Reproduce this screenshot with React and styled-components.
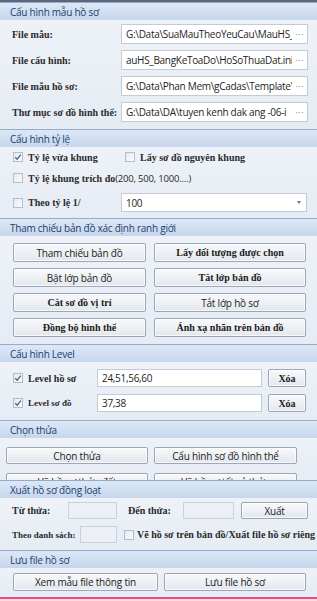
import React from "react";
import styled, { createGlobalStyle } from "styled-components";

const SANS = `"Open Sans", "Noto Sans", "DejaVu Sans", sans-serif`;
const SERIF = `"Liberation Serif", "DejaVu Serif", serif`;

const Global = createGlobalStyle`
  html, body { margin: 0; padding: 0; background: #e9eef5; }
  body { width: 317px; height: 601px; overflow: hidden; font-family: ${SANS}; }
  * { box-sizing: border-box; }
`;

const Frame = styled.div`
  width: 317px;
  height: 601px;
  display: flex;
  flex-direction: column;
  background: #e8edf4;
  border-top: 2px solid #5a6779;
  overflow: hidden;
`;

const Header = styled.div`
  height: 18px;
  flex: none;
  display: flex;
  align-items: center;
  padding-left: 10px;
  border-top: 1px solid #93abcd;
  background: linear-gradient(#dde8f6, #c6d6ec);
  color: #1c3d70;
  font-family: ${SANS};
  font-size: 10px;
  letter-spacing: -0.25px;
  position: relative;
  z-index: 1;
`;

const Body = styled.div`
  height: ${(p) => p.$h}px;
  flex: none;
  padding: ${(p) => p.$pad || "0"};
  display: flex;
  flex-direction: column;
  gap: ${(p) => p.$gap || 0}px;
  overflow: hidden;
  background: linear-gradient(#eef2f8, #e6ecf4);
`;

const FieldRow = styled.div`
  display: grid;
  grid-template-columns: 109px 187px;
  align-items: center;
  height: 20px;
`;

const Label = styled.span`
  font-family: ${SERIF};
  font-weight: bold;
  font-size: ${(p) => p.$size || 10}px;
  color: #2a2a2a;
  white-space: nowrap;
  width: ${(p) => (p.$w ? `${p.$w}px` : "auto")};
  margin-left: ${(p) => p.$ml || 0}px;
  flex: none;
`;

const Sans = styled.span`
  font-family: ${SANS};
  font-weight: normal;
  font-size: 9.5px;
  letter-spacing: -0.2px;
`;

const Field = styled.div`
  display: flex;
  align-items: center;
  height: ${(p) => p.$h || 20}px;
  width: ${(p) => (p.$w ? `${p.$w}px` : "auto")};
  min-width: 0;
  margin-left: ${(p) => p.$ml || 0}px;
  flex: none;
  padding: 0 3px 0 4px;
  background: ${(p) => (p.$muted ? "#eceff4" : "#ffffff")};
  border: 1px solid ${(p) => (p.$muted ? "#c9d1dc" : "#c2cbd8")};
  font-family: ${SANS};
  font-size: 10px;
  letter-spacing: -0.3px;
  color: #1e1e1e;
  overflow: hidden;
`;

const FieldText = styled.span`
  flex: 1;
  min-width: 0;
  overflow: hidden;
  white-space: nowrap;
`;

const Dots = styled.span`
  flex: none;
  color: #7a7f88;
  font-size: 9px;
  letter-spacing: 0.5px;
  margin-left: 3px;
`;

const Arrow = styled.span`
  flex: none;
  width: 0;
  height: 0;
  border-left: 2.5px solid transparent;
  border-right: 2.5px solid transparent;
  border-top: 3px solid #6d7480;
  margin-right: 2px;
`;

const CheckRow = styled.div`
  display: flex;
  align-items: center;
  height: ${(p) => p.$h || 18}px;
  margin-top: ${(p) => p.$mt || 0}px;
  padding-left: 13px;
`;

const CheckItem = styled.div`
  display: flex;
  align-items: center;
  width: ${(p) => (p.$w ? `${p.$w}px` : "auto")};
  margin-left: ${(p) => p.$ml || 0}px;
  flex: none;
  gap: ${(p) => p.$gap || 5}px;
`;

const Box = styled.span`
  width: 10px;
  height: 10px;
  flex: none;
  display: flex;
  align-items: center;
  justify-content: center;
  border: 1px solid #b3bdcb;
  background: linear-gradient(135deg, #e4e8ee, #fbfcfd);
`;

const Check = ({ on }) => (
  <Box>
    {on && (
      <svg width="8" height="8" viewBox="0 0 8 8">
        <path d="M1.2 4.2 L3.2 6.2 L6.8 1.6" fill="none" stroke="#4f6484" strokeWidth="1.3" />
      </svg>
    )}
  </Box>
);

const ButtonGrid = styled.div`
  display: grid;
  grid-template-columns: ${(p) => p.$cols};
  grid-auto-rows: ${(p) => p.$rh}px;
  column-gap: ${(p) => p.$cg}px;
  row-gap: ${(p) => p.$rg || 0}px;
  padding-left: ${(p) => p.$pl}px;
`;

const Btn = styled.div`
  display: flex;
  align-items: center;
  justify-content: center;
  width: ${(p) => (p.$w ? `${p.$w}px` : "auto")};
  height: ${(p) => (p.$h ? `${p.$h}px` : "auto")};
  margin-left: ${(p) => p.$ml || 0}px;
  flex: none;
  border: 1px solid #9ba7b8;
  border-radius: 2px;
  background: linear-gradient(#f8f9fb, #e3e7ed);
  box-shadow: inset 0 0 0 1px rgba(255, 255, 255, 0.7);
  color: #1b1b1b;
  white-space: nowrap;
  overflow: hidden;
  font-family: ${(p) => (p.$serif ? SERIF : SANS)};
  font-weight: ${(p) => (p.$serif ? "bold" : "normal")};
  font-size: 10px;
  letter-spacing: ${(p) => (p.$serif ? 0 : -0.2)}px;
`;

const FlexRow = styled.div`
  display: flex;
  align-items: center;
  height: ${(p) => p.$h || 17}px;
  padding-left: ${(p) => p.$pl || 12}px;
  white-space: nowrap;
`;

const Footer = styled.div`
  flex: 1;
  border-top: 2px solid #e0507a;
  background: #f6dbe4;
`;

const fileRows = [
  ["File mẫu:", "G:\\Data\\SuaMauTheoYeuCau\\MauHS_"],
  ["File cấu hình:", "auHS_BangKeToaDo\\HoSoThuaDat.ini"],
  ["File mẫu hồ sơ:", "G:\\Data\\Phan Mem\\gCadas\\Template\\"],
  ["Thư mục sơ đồ hình thể:", "G:\\Data\\DA\\tuyen kenh  dak ang -06-i"],
];

const mapButtons = [
  ["Tham chiếu bản đồ", false],
  ["Lấy đối tượng được chọn", true],
  ["Bật lớp bản đồ", false],
  ["Tắt lớp bản đồ", true],
  ["Cắt sơ đồ vị trí", true],
  ["Tắt lớp hồ sơ", false],
  ["Đồng bộ hình thể", true],
  ["Ánh xạ nhãn trên bản đồ", true],
];

export default function App() {
  return (
    <>
      <Global />
      <Frame>
        <Header>Cấu hình mẫu hồ sơ</Header>
        <Body $h={109} $pad="4px 0 0 12px" $gap={6}>
          {fileRows.map(([l, v]) => (
            <FieldRow key={l}>
              <Label>{l}</Label>
              <Field>
                <FieldText>{v}</FieldText>
                <Dots>···</Dots>
              </Field>
            </FieldRow>
          ))}
        </Body>

        <Header>Cấu hình tỷ lệ</Header>
        <Body $h={71} $pad="1px 0 0 0" $gap={3}>
          <CheckRow>
            <CheckItem $w={112}>
              <Check on />
              <Label>Tỷ lệ vừa khung</Label>
            </CheckItem>
            <CheckItem>
              <Check />
              <Label>Lấy sơ đồ nguyên khung</Label>
            </CheckItem>
          </CheckRow>
          <CheckRow>
            <CheckItem>
              <Check />
              <Label>
                Tỷ lệ khung trích đo<Sans>(200, 500, 1000....)</Sans>
              </Label>
            </CheckItem>
          </CheckRow>
          <CheckRow $h={19} $mt={3}>
            <CheckItem $w={108}>
              <Check />
              <Label>Theo tỷ lệ 1/</Label>
            </CheckItem>
            <Field $w={186} $h={19}>
              <FieldText>100</FieldText>
              <Arrow />
            </Field>
          </CheckRow>
        </Body>

        <Header>Tham chiếu bản đồ xác định ranh giới</Header>
        <Body $h={108} $pad="7px 0 0 0">
          <ButtonGrid $cols="133px 152px" $rh={19} $cg={8} $rg={6} $pl={13}>
            {mapButtons.map(([t, s]) => (
              <Btn key={t} $serif={s}>
                {t}
              </Btn>
            ))}
          </ButtonGrid>
        </Body>

        <Header>Cấu hình Level</Header>
        <Body $h={58} $pad="7px 0 0 0" $gap={7}>
          {[
            ["Level hồ sơ", "24,51,56,60", 10],
            ["Level sơ đồ", "37,38", 9],
          ].map(([l, v, fs]) => (
            <CheckRow key={l}>
              <CheckItem $w={84}>
                <Check on />
                <Label $size={fs}>{l}</Label>
              </CheckItem>
              <Field $w={165} $h={18}>
                <FieldText>{v}</FieldText>
              </Field>
              <Btn $serif $w={38} $h={18} $ml={6}>
                Xóa
              </Btn>
            </CheckRow>
          ))}
        </Body>

        <Header>Chọn thửa</Header>
        <Body $h={42} $pad="9px 0 0 0">
          <ButtonGrid $cols="142px 143px" $rh={17} $cg={6} $rg={9} $pl={6}>
            <Btn>Chọn thửa</Btn>
            <Btn>Cấu hình sơ đồ hình thể</Btn>
            <Btn>Vẽ hồ sơ thửa đất</Btn>
            <Btn>Vẽ hồ sơ tất cả thửa</Btn>
          </ButtonGrid>
        </Body>

        <Header>Xuất hồ sơ đồng loạt</Header>
        <Body $h={52} $pad="4px 0 0 0" $gap={7}>
          <FlexRow>
            <Label $w={56}>Từ thửa:</Label>
            <Field $w={49} $h={17} $muted />
            <Label $w={55} $ml={11}>
              Đến thửa:
            </Label>
            <Field $w={51} $h={17} $muted />
            <Btn $w={67} $h={17} $ml={7}>
              Xuất
            </Btn>
          </FlexRow>
          <FlexRow>
            <Label $w={68} $size={9}>
              Theo danh sách:
            </Label>
            <Field $w={37} $h={17} $muted />
            <CheckItem $ml={7} $gap={3}>
              <Check />
              <Label>Vẽ hồ sơ trên bản đồ/Xuất file hồ sơ riêng</Label>
            </CheckItem>
          </FlexRow>
        </Body>

        <Header>Lưu file hồ sơ</Header>
        <Body $h={29} $pad="5px 0 0 0">
          <ButtonGrid $cols="145px 142px" $rh={18} $cg={6} $pl={13}>
            <Btn>Xem mẫu file thông tin</Btn>
            <Btn>Lưu file hồ sơ</Btn>
          </ButtonGrid>
        </Body>
        <Footer />
      </Frame>
    </>
  );
}
